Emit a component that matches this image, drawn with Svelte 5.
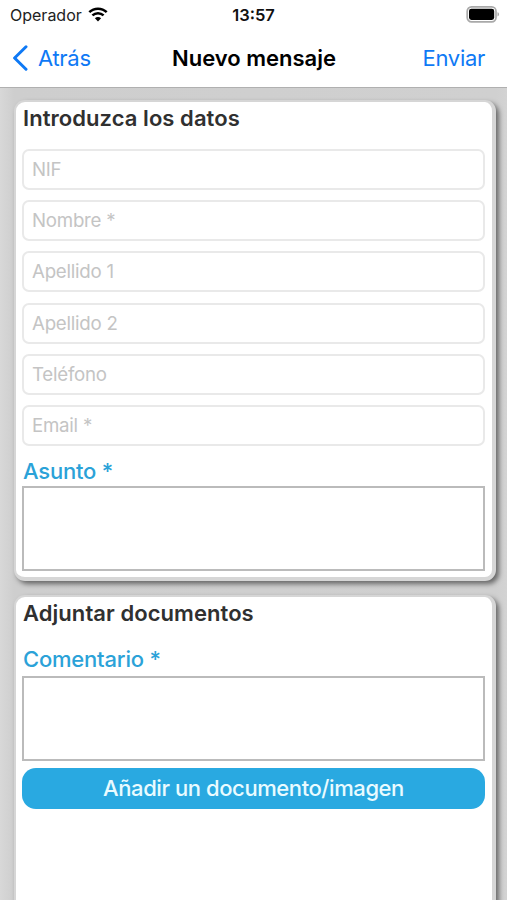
<script lang="ts">
    let fields = $state([
        { name: 'nif', label: 'NIF', value: '' },
        { name: 'nombre', label: 'Nombre *', value: '' },
        { name: 'apellido1', label: 'Apellido 1', value: '' },
        { name: 'apellido2', label: 'Apellido 2', value: '' },
        { name: 'telefono', label: 'Teléfono', value: '' },
        { name: 'email', label: 'Email *', value: '' }
    ])

    let asunto = $state('')
    let comentario = $state('')
</script>

<div class="screen">
    <header>
        <div class="status">
            <div class="carrier">
                <span>Operador</span>
                <svg class="wifi" viewBox="0 0 20 15" width="20" height="15">
                    <path d="M1.3 5.2C6.2 .5 13.8 .5 18.7 5.2" />
                    <path d="M4.4 8.4C7.6 5.4 12.4 5.4 15.6 8.4" />
                    <path class="dot" d="M6.9 11.2C8.7 9.6 11.3 9.6 13.1 11.2L10 14.4Z" />
                </svg>
            </div>
            <span class="time">13:57</span>
            <svg class="battery" viewBox="0 0 34 17" width="34" height="17">
                <rect x="1.2" y="0.9" width="28.8" height="14.9" rx="4.3" fill="none" stroke="#a9a9a9" stroke-width="1.7" />
                <rect x="3" y="2.7" width="25.2" height="11.2" rx="2.4" fill="#000" />
                <path d="M31.5 6.2C33.6 6.8 33.6 9.8 31.5 10.4Z" fill="#a9a9a9" />
            </svg>
        </div>
        <nav>
            <button class="link back">
                <svg viewBox="0 0 16 26" width="16" height="26">
                    <path d="M14 1.8L2.6 13L14 24.2" />
                </svg>
                <span>Atrás</span>
            </button>
            <h1>Nuevo mensaje</h1>
            <button class="link send">Enviar</button>
        </nav>
    </header>

    <main>
        <section class="card">
            <h2>Introduzca los datos</h2>
            <div class="fields">
                {#each fields as field}
                    <input type="text" name={field.name} placeholder={field.label} bind:value={field.value}>
                {/each}
            </div>
            <label for="asunto">Asunto *</label>
            <textarea id="asunto" bind:value={asunto}></textarea>
        </section>

        <section class="card documents">
            <h2>Adjuntar documentos</h2>
            <label for="comentario">Comentario *</label>
            <textarea id="comentario" bind:value={comentario}></textarea>
            <button class="add">Añadir un documento/imagen</button>
        </section>
    </main>
</div>

<style>
    :global(body){
        margin: 0;
    }

    .screen, .screen *{
        box-sizing: border-box;
        font-family: Inter, "Liberation Sans", sans-serif;
    }

    .screen{
        display: flex;
        flex-direction: column;
        height: 900px;
        overflow: hidden;
        background: #d3d3d3;
    }

    header{
        flex: none;
        height: 88px;
        background: #fff;
        border-bottom: 1px solid #b0b0b0;
    }

    .status{
        display: grid;
        grid-template-columns: 1fr auto 1fr;
        align-items: center;
        height: 29px;
        padding: 0 7px;
    }

    .carrier{
        display: flex;
        align-items: center;
        gap: 6px;
        padding-left: 3px;
        font-size: 16px;
        color: #222;
    }

    .wifi path{
        fill: none;
        stroke: #000;
        stroke-width: 2.5;
    }

    .wifi .dot{
        fill: #000;
        stroke: none;
    }

    .time{
        font-size: 16.5px;
        font-weight: 600;
        color: #111;
    }

    .battery{
        justify-self: end;
    }

    nav{
        display: grid;
        grid-template-columns: 1fr auto 1fr;
        align-items: center;
        height: 57px;
        padding: 0 12px 0 13px;
    }

    nav h1{
        margin: 0;
        font-size: 22px;
        font-weight: 600;
        color: #000;
    }

    .link{
        padding: 0;
        border: 0;
        background: none;
        font-size: 22px;
        letter-spacing: -0.3px;
        color: #0e79f5;
    }

    .back{
        display: flex;
        align-items: center;
        gap: 10px;
        margin-left: -1px;
    }

    .back path{
        fill: none;
        stroke: #0e79f5;
        stroke-width: 3;
        stroke-linecap: round;
        stroke-linejoin: round;
    }

    .send{
        justify-self: end;
        margin-right: 10px;
    }

    main{
        flex: 1;
        display: flex;
        flex-direction: column;
        gap: 14px;
        padding: 12px 11px 0 14px;
        background: linear-gradient(90deg, #d8d8d8, #cecece 14px, #d0d0d0 496px, #d3d3d3);
    }

    .card{
        flex: none;
        height: 481px;
        padding: 0 7px 0 6px;
        background: #fff;
        border: solid #d6d6d6;
        border-width: 2px 4px 4px 2px;
        border-radius: 11px;
        box-shadow: 3px 3px 5px 0 rgba(0, 0, 0, 0.5);
    }

    .documents{
        height: 340px;
    }

    h2{
        margin: 0;
        height: 47px;
        padding-left: 1px;
        font-size: 22px;
        letter-spacing: 0.06px;
        line-height: 33px;
        font-weight: 600;
        color: #303030;
    }

    .fields{
        display: grid;
        gap: 10.2px;
    }

    input{
        width: 100%;
        height: 41px;
        padding: 0 8px;
        border: 2px solid #e9e9e9;
        border-radius: 7px;
        background: #fff;
        font-size: 18.7px;
        letter-spacing: -0.25px;
        outline: none;
    }

    input::placeholder{
        color: #c4c4c4;
        opacity: 1;
    }

    label{
        display: block;
        height: 40px;
        padding-left: 1px;
        font-size: 22px;
        font-weight: 500;
        letter-spacing: -0.2px;
        line-height: 50px;
        color: #2ba2d8;
    }

    .documents label{
        height: 32px;
        line-height: 30px;
    }

    textarea{
        display: block;
        width: 100%;
        height: 85px;
        border: 2px solid #bbb;
        border-radius: 0;
        background: #fff;
        font-size: 19px;
        resize: none;
        outline: none;
    }

    .add{
        display: block;
        width: 100%;
        height: 41px;
        margin-top: 7px;
        padding: 0 0 2px;
        border: 0;
        border-radius: 14px;
        background: #29a9e1;
        font-size: 22px;
        font-weight: 500;
        letter-spacing: -0.42px;
        color: #e9fbff;
    }
</style>
